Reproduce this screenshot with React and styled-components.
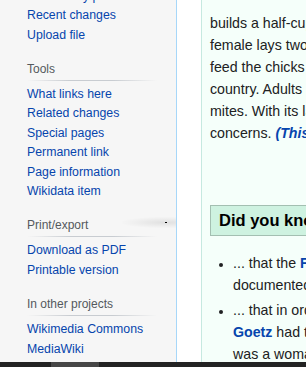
import React from "react";
import styled, { createGlobalStyle } from "styled-components";

const Global = createGlobalStyle`
  html, body { margin: 0; padding: 0; background: #fff; }
  body { font-family: "Liberation Sans", Arial, sans-serif; }
`;

const Page = styled.div`
  width: 306px;
  height: 367px;
  overflow: hidden;
  display: flex;
  flex-direction: column;
`;

const Main = styled.div`
  flex: 1;
  display: flex;
  min-height: 0;
  background: #fff;
`;

const Sidebar = styled.nav`
  position: relative;
  width: 177px;
  flex-shrink: 0;
  box-sizing: border-box;
  background: #f6f6f6;
  border-right: 1px solid #a7d7f9;
  padding-left: 27px;
  overflow: hidden;
`;

const Portal = styled.div`
  margin-top: ${({ first }) => (first ? "-13.5px" : "16.7px")};
`;

const PortalHeading = styled.h3`
  margin: 0;
  width: 130px;
  font-size: 12px;
  font-weight: normal;
  line-height: 14px;
  color: #54595d;
  padding-bottom: 5px;
  background-image: linear-gradient(
    to right,
    rgba(200, 204, 209, 0) 0,
    #c8ccd1 33%,
    #c8ccd1 66%,
    rgba(200, 204, 209, 0) 100%
  );
  background-size: 100% 1px;
  background-position: bottom;
  background-repeat: no-repeat;
`;

const LinkList = styled.ul`
  list-style: none;
  margin: 0;
  padding: ${({ plain }) => (plain ? "0" : "4px 0 0")};
`;

const LinkItem = styled.li`
  height: 19.5px;
  line-height: 19.5px;
  font-size: 12.3px;
  color: #0645ad;
  white-space: nowrap;
`;

const Smudge = styled.div`
  position: absolute;
  left: 122px;
  top: 217px;
  width: 56px;
  height: 11px;
  background: radial-gradient(
    ellipse at 78% 50%,
    rgba(0, 0, 0, 0.09) 0,
    rgba(0, 0, 0, 0.035) 45%,
    rgba(0, 0, 0, 0) 75%
  );
  &::after {
    content: "";
    position: absolute;
    left: 43px;
    top: 5px;
    width: 2px;
    height: 1px;
    background: #000;
  }
`;

const Gap = styled.div`
  width: 24px;
  flex-shrink: 0;
  background: #fff;
`;

const Box = styled.section`
  flex: 1;
  background: #f5fffa;
  border-left: 1px solid #c6e9e0;
  padding: 12px 0 0 8px;
  overflow: hidden;
  color: #202122;
  font-size: 14.2px;
`;

const Line = styled.div`
  line-height: 22px;
  height: 22px;
  white-space: nowrap;
`;

const Em = styled.a`
  color: #0645ad;
  font-weight: bold;
  font-style: italic;
`;

const Strong = styled.a`
  color: #0645ad;
  font-weight: bold;
`;

const SectionHead = styled.h2`
  margin: 61px 0 0;
  height: 29px;
  line-height: 29px;
  background: #cef2e0;
  border: 1px solid #a3bfb1;
  border-right: none;
  padding-left: 8px;
  font-size: 16.5px;
  font-weight: bold;
  color: #000;
  white-space: nowrap;
`;

const Bullets = styled.ul`
  margin: 16px 0 0;
  padding: 0 0 0 23px;
  list-style: disc;
  & li::marker { font-size: 12px; }
`;

const Bullet = styled.li`
  margin-bottom: 3px;
`;

const ScrollBar = styled.div`
  height: 5px;
  flex-shrink: 0;
  background: #232323;
  display: flex;
`;

const Thumb = styled.div`
  margin-left: 51px;
  width: 48px;
  background: #464646;
`;

const portals = [
  {
    links: ["Community portal", "Recent changes", "Upload file"],
  },
  {
    title: "Tools",
    links: [
      "What links here",
      "Related changes",
      "Special pages",
      "Permanent link",
      "Page information",
      "Wikidata item",
    ],
  },
  { title: "Print/export", links: ["Download as PDF", "Printable version"] },
  { title: "In other projects", links: ["Wikimedia Commons", "MediaWiki"] },
];

export default function App() {
  return (
    <>
      <Global />
      <Page>
        <Main>
          <Sidebar>
            {portals.map((p, i) => (
              <Portal key={i} first={i === 0}>
                {p.title && <PortalHeading>{p.title}</PortalHeading>}
                <LinkList plain={!p.title}>
                  {p.links.map((l) => (
                    <LinkItem key={l}>{l}</LinkItem>
                  ))}
                </LinkList>
              </Portal>
            ))}
            <Smudge />
          </Sidebar>
          <Gap />
          <Box>
            <Line>builds a half-cup nest of grass and moss. The</Line>
            <Line>female lays two eggs, and both parents</Line>
            <Line>feed the chicks until they leave the</Line>
            <Line>country. Adults are hosts to feather</Line>
            <Line>mites. With its large range, it is of least</Line>
            <Line>
              concerns. <Em>(This article is partly…)</Em>
            </Line>
            <SectionHead>Did you know ...</SectionHead>
            <Bullets>
              <Bullet>
                <Line>
                  ... that the <Strong>Fortress</Strong>
                </Line>
                <Line>documented</Line>
              </Bullet>
              <Bullet>
                <Line>... that in order to</Line>
                <Line>
                  <Strong>Goetz</Strong> had to
                </Line>
                <Line>was a woman</Line>
              </Bullet>
            </Bullets>
          </Box>
        </Main>
        <ScrollBar>
          <Thumb />
        </ScrollBar>
      </Page>
    </>
  );
}
